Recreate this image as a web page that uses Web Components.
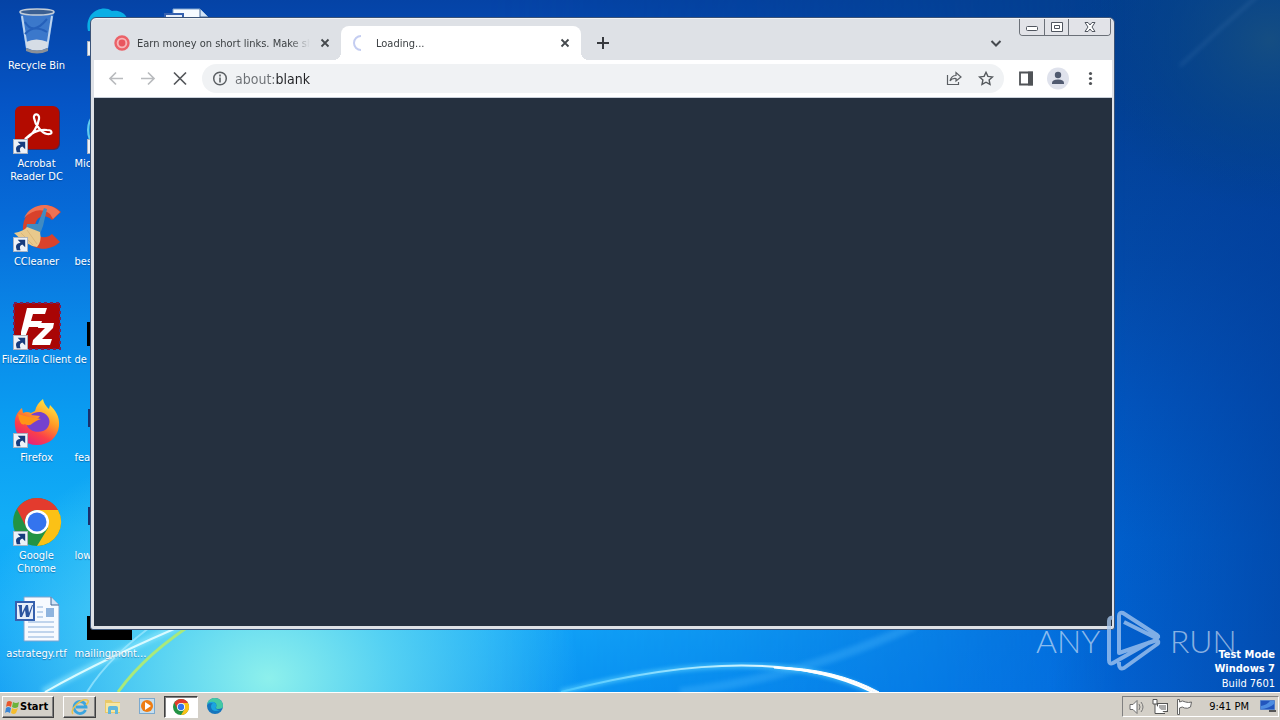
<!DOCTYPE html>
<html lang="en">
<head>
<meta charset="utf-8">
<title>Desktop</title>
<style>
  html, body { height: 100%; margin: 0; }
  body { font: 11px/13px "DejaVu Sans Condensed", "Liberation Sans", sans-serif; overflow: hidden; }
</style>
</head>
<body>
<desk-top></desk-top>
<script>
const glyphs = {
  bin: `<svg viewBox="0 0 48 48"><path d="M7 4h34l-6 37q-11 6-22 0z" fill="#4d88d4" opacity=".75"/><path d="M9 8l5 32M39 8l-5 32" stroke="#bcd4f0" stroke-width="2"/><path d="M12 14q8 14 22-3M12 26q9-10 22-2" fill="none" stroke="#2560ba" stroke-width="2"/><path d="M13 34q10-5 22 0l-1 6q-10 5-20 0z" fill="#d6dde6"/><path d="M13 40q11 5 22 0v3q-11 5-22 0z" fill="#8b9097"/><ellipse cx="24" cy="4" rx="17" ry="3" fill="#3b5f91" stroke="#c5ced8" stroke-width="1.5"/></svg>`,
  acrobat: `<svg viewBox="0 0 48 48"><rect x="2" y="1" width="45" height="43" rx="6" fill="#720909" opacity=".6"/><rect x="2" y="0" width="44" height="43" rx="6" fill="#b30b00"/><path d="M12 33c8-4 13-13 14-20 1-6-6-6-5-1 1 7 8 15 13 16 6 1 6-4 0-4-8-1-16 3-22 9z" fill="none" stroke="#fff" stroke-width="2.2"/></svg>`,
  ccleaner: `<svg viewBox="0 0 48 48"><path d="M48 8C36-5 12 1 10 22s22 30 37 16l-8-8c-8 7-18 2-17-8s10-13 17-6z" fill="#d8422b"/><path d="M47 8C36-4 17 0 11 14q14-13 26-4l3 5z" fill="#ef7253"/><path d="M31 4l-6 16-11 0-1 5 14 5 3-8 4-17z" fill="#418bc1"/><path d="M1 29q10-2 13-6l13 5q2 10-3 15-10-1-23-14z" fill="#e9c98c"/><path d="M8 29l12 12M14 26l10 14" stroke="#dbb678"/></svg>`,
  filezilla: `<svg viewBox="0 0 48 48"><rect x="1" y="1" width="46" height="46" fill="#a90505"/><rect x="1" y="1" width="46" height="46" fill="none" stroke="#74205a" stroke-width="2" stroke-dasharray="3 3"/><path d="M14 6h20l-2 6H20l-2 7h11l-2 6H16l-5 13H8V30zM26 21h15l-1 5-11 11h10l-2 6H19l1-5 12-12h-7z" fill="#fff"/></svg>`,
  firefox: `<svg viewBox="0 0 48 48"><defs><linearGradient id="f" x1=".8" y1="0" x2=".25" y2="1"><stop stop-color="#fff14a"/><stop offset=".4" stop-color="#ff9b26"/><stop offset=".7" stop-color="#fb4049"/><stop offset="1" stop-color="#df1c83"/></linearGradient></defs><path d="M2 26c-1-8 2-14 7-18l1 5q4-2 8 0l4-2c1-5 4-9 8-12 1 5 3 7 6 10l1-4c5 5 10 11 9 21-1 11-10 19-22 19S3 37 2 26z" fill="url(#f)"/><path d="M18 15c10-8 23 2 17 12-5 8-21 6-22-5l7-2q5-1 7-4z" fill="#7541cf"/><path d="M5 14q9 3 18 4l5 1q-4 1-8 4-4 4-8 1Q7 27 5 14" fill="#ff9417"/></svg>`,
  chrome: `<svg viewBox="0 0 48 48"><circle cx="24" cy="24" r="24" fill="#229344"/><path d="M24 12h21a24 24 0 0 1-21 36l11-18z" fill="#fbc116"/><path d="M4 11a24 24 0 0 1 41 1H24a12 12 0 0 0-11 17z" fill="#e33b2e"/><circle cx="24" cy="24" r="12" fill="#fff"/><circle cx="24" cy="24" r="9.5" fill="#3474ee"/></svg>`,
  word: `<svg viewBox="0 0 48 48"><path d="M11 1h27l8 8v36H11z" fill="#f6faff" stroke="#7fa4cf"/><path d="M38 1v8h8" fill="#d1e3f6" stroke="#416796"/><path d="M24 11h6M24 16h6M24 21h6M15 26h26M15 31h26M15 36h26M15 41h26" stroke="#89aeda"/><rect x="33" y="12" width="8" height="9" fill="#8fb4de"/><rect x="3" y="6" width="18" height="18" fill="#e6eefa" stroke="#3560ae" stroke-width="2"/><path d="M5 9h4v8l4-8h2l1 8 3-8h1l-4 12h-3l-1-7-3 7H7L6 11z" fill="#2b549f"/></svg>`,
  skype: `<svg viewBox="0 0 48 48"><path d="M1 23C-3 4 16-4 25 3c12-2 19 8 17 21z" fill="#0aaee5"/></svg>`,
  edgebit: `<svg viewBox="0 0 48 48"><circle cx="24" cy="24" r="23" fill="#1789d8" stroke="#62ccee" stroke-width="2"/></svg>`,
  black: `<svg viewBox="0 0 48 48"><rect x="0" y="20" width="45" height="24" fill="#000"/></svg>`,
  sliver: `<svg viewBox="0 0 48 48"><path d="M2 9v18" stroke="#19306c" stroke-width="2"/></svg>`,
  none: `<svg viewBox="0 0 48 48"></svg>`,
  arrow: `<svg viewBox="0 0 16 16"><rect x=".5" y=".5" width="15" height="15" fill="#edf2f8" stroke="#aab2bf"/><path d="M4 14q-3-7 4-8L5 3h8v8l-3-3q-4 1-2 6z" fill="#173c7d"/></svg>`,
  favicon: `<svg viewBox="0 0 16 16"><circle cx="8" cy="8" r="6.5" fill="#f6b5b8" stroke="#eb6268" stroke-width="2.4"/><circle cx="8" cy="8" r="3.4" fill="#e9565e"/></svg>`,
  spinner: `<svg viewBox="0 0 16 16"><path d="M8 1a7 7 0 0 0 0 14" fill="none" stroke="#c4cdf1" stroke-width="2"/></svg>`,
  close: `<svg viewBox="0 0 16 16"><path d="M4.500 4.500l7 7m0-7l-7 7" stroke="#45494d" stroke-width="1.800"/></svg>`,
  plus: `<svg viewBox="0 0 16 16"><path d="M8 2v12M2 8h12" stroke="#37393e" stroke-width="2"/></svg>`,
  chevron: `<svg viewBox="0 0 16 16"><path d="M3.500 6L8 10.500 12.500 6" fill="none" stroke="#45494f" stroke-width="2"/></svg>`,
  back: `<svg viewBox="0 0 16 16"><path d="M15 7.500H2m6-6l-6 6 6 6" fill="none" stroke="#b9bbbe" stroke-width="1.700"/></svg>`,
  forward: `<svg viewBox="0 0 16 16"><path d="M1 7.500h13m-6-6l6 6-6 6" fill="none" stroke="#b9bbbe" stroke-width="1.700"/></svg>`,
  stop: `<svg viewBox="0 0 16 16"><path d="M2 1.500l12 12m0-12l-12 12" stroke="#54575b" stroke-width="1.700"/></svg>`,
  info: `<svg viewBox="0 0 16 16"><circle cx="8" cy="7.500" r="6.300" fill="none" stroke="#5b5f63" stroke-width="1.500"/><path d="M8 6.500v5m0-8v2" stroke="#5b5f63" stroke-width="1.600"/></svg>`,
  share: `<svg viewBox="0 0 16 16"><path d="M1.500 4v9.500h11V11M4 10c1-4 3-5.500 6-5.500V1.500l5 4.500-5 4V7.500Q6 7 4 10z" fill="none" stroke="#5b5f63" stroke-width="1.200"/></svg>`,
  star: `<svg viewBox="0 0 16 16"><path d="M8 1.300l1.900 4.100 4.500.5-3.300 3 .9 4.500L8 11.200l-4 2.200.9-4.500-3.300-3 4.500-.5z" fill="none" stroke="#54585c" stroke-width="1.400"/></svg>`,
  panel: `<svg viewBox="0 0 16 16"><path d="M2 1.500h12v12H2z" fill="#fff" stroke="#505357" stroke-width="1.800"/><path d="M10 .6h5v13.800h-5z" fill="#505357"/></svg>`,
  avatar: `<svg viewBox="0 0 22 22"><circle cx="11" cy="10.500" r="11" fill="#dfe2ec"/><circle cx="11" cy="7" r="3.200" fill="#505a70"/><path d="M5 16v-1q0-3.500 6-3.500t6 3.500v1z" fill="#505a70"/></svg>`,
  dots: `<svg viewBox="0 0 16 16"><circle cx="8.500" cy="2.500" r="1.600" fill="#505357"/><circle cx="8.500" cy="7.500" r="1.600" fill="#505357"/><circle cx="8.500" cy="12.500" r="1.600" fill="#505357"/></svg>`,
  min: `<svg viewBox="0 0 16 16"><rect x="2.500" y="7.500" width="11" height="4" rx="1" fill="#fff" stroke="#50555f"/></svg>`,
  max: `<svg viewBox="0 0 16 16"><path d="M2.500 3.500h11v9h-11zM5.500 6.500h5v3h-5z" fill="#fff" stroke="#50555f"/></svg>`,
  quit: `<svg viewBox="0 0 16 16"><path d="M3 3.500h3l2 2.500 2-2.500h3l-3 4.500 3 4.500h-3L8 10l-2 2.500H3L6 8z" fill="#fff" stroke="#50555f"/></svg>`,
  windows: `<svg viewBox="0 0 16 16"><path d="M3 3q2-2 5 0L7 8Q4 6 2 8z" fill="#e9572b"/><path d="M9 3q3 2 6 0l-1 5q-3 2-6 0z" fill="#6db33c"/><path d="M2 9q2-2 5 0l-1 5q-3-2-5 0z" fill="#3a86d5"/><path d="M8 9q3 2 6 0l-2 5q-2 2-5 0z" fill="#f5bd2d"/></svg>`,
  ie: `<svg viewBox="0 0 18 18"><path d="M14.500 12A6 6 0 1 1 15 9H5" fill="none" stroke="#3ca5df" stroke-width="2.800"/><path d="M2 16C-2 12 10 0 16 2q3 1-1 5" fill="none" stroke="#ecc34c" stroke-width="1.500"/></svg>`,
  folder: `<svg viewBox="0 0 18 18"><path d="M1 2h6l2 2h7v11H1z" fill="#e9c969"/><path d="M2 5h14v9H2z" fill="#f7e7a4"/><path d="M4 16v-6q0-2 2-2h6q2 0 2 2v6h-3v-4H7v4z" fill="#62b7dc"/></svg>`,
  media: `<svg viewBox="0 0 18 18"><rect x="1.500" y=".5" width="15" height="15" fill="#c6dff0" stroke="#7ba9ce"/><circle cx="9" cy="8" r="6" fill="#ee7d13"/><path d="M7 4l6 4-6 4z" fill="#fff"/></svg>`,
  edge: `<svg viewBox="0 0 18 18"><circle cx="9" cy="8" r="8" fill="#1675bd"/><path d="M1 7C2-3 17-2 17 8q0 3-5 3-2 0-2-1 2-6-4-6-4 0-5 3z" fill="#43c9a4"/><path d="M1 7c3-6 11-3 9 2-1 1 0 3 4 3-9 4-11-5-7-7Q2 5 1 7" fill="#1ba4df"/></svg>`,
  sound: `<svg viewBox="0 0 18 18"><path d="M2 6.500h3l4-4v13l-4-4H2z" fill="#fff" stroke="#6d6d6d"/><path d="M11 6q2 3 0 6M13 4q4 5 0 10" fill="none" stroke="#777"/></svg>`,
  network: `<svg viewBox="0 0 18 18"><rect x="5.500" y="5.500" width="10" height="8" fill="#aaa" stroke="#555"/><path d="M6.500 6.500h8v6h-8z" fill="none" stroke="#fff"/><path d="M1 1.500h4V6H1zM3 6v9.500h10" fill="#fff" stroke="#555"/></svg>`,
  flag: `<svg viewBox="0 0 18 18"><path d="M1.500 1.500v15h2V10q3-2 5 0 3 1 6-1l1-5q-3 1-6 0-3-2-6 0V1.500z" fill="#fff" stroke="#666"/></svg>`,
  monitor: `<svg viewBox="0 0 18 18"><path d="M1.500 2.500h14v9h-14z" fill="#2256bd" stroke="#5482cb"/><path d="M2 8q6-1 9-5h4v3q-6 5-13 5z" fill="#4d8de1"/><path d="M10 13h7" stroke="#555" stroke-width="2"/></svg>`
};

function define(name, render) {
  customElements.define(name, class extends HTMLElement {
    constructor() {
      super();
      this.attachShadow({ mode: "open" }).innerHTML = render(this);
    }
  });
}

define("ui-glyph", el => `
<style>:host{display:block;flex:none;width:16px;height:16px} svg{display:block;width:100%;height:100%;overflow:visible}</style>
${glyphs[el.getAttribute("name")]}`);

define("desk-icon", el => `
<style>
:host{display:flex;flex-direction:column;align-items:center;gap:3px;height:98px;box-sizing:border-box;color:#fff;text-align:center;text-shadow:0 1px 1px #0035707a}
.art{display:grid;width:48px;height:48px}
.art>*{grid-area:1/1}
.pic{width:48px;height:48px}
.link{align-self:end;width:15px;height:15px}
.label{width:72px;white-space:pre-line}
:host([cut]) .label{text-align:left}
</style>
<div class="art"><ui-glyph class="pic" name="${el.getAttribute("icon")}"></ui-glyph>${el.hasAttribute("shortcut") ? '<ui-glyph class="link" name="arrow"></ui-glyph>' : ""}</div>
<div class="label"><slot></slot></div>`);

define("wall-paper", () => `
<style>
:host{display:block;overflow:hidden;background:linear-gradient(#033f8e,#034196 15%,#034cab 38%,#0259c4 58%,#0066d6 78%,#0369dc)}
div{position:absolute;inset:0}
.left{background:linear-gradient(#0543a6,#0555c6 15%,#076bd8 31%,#0a88e8 47%,#0a9cf1 60%,#12aef7 76%,#14aafa 88%,#0a98f5);-webkit-mask:linear-gradient(90deg,#000 38%,#000b 56%,#0006 72%,#0000 88%)}
.glow{background:radial-gradient(ellipse 310px 250px at 21% 98%,#8df0ec 0%,#65dcf2cc 40%,#32c4fa00 100%)}
.dark{background:linear-gradient(90deg,#0240a000 82%,#023c98a0)}
svg{position:absolute;inset:0;width:100%;height:100%}
</style>
<div class="left"></div><div class="glow"></div><div class="dark"></div>
<svg viewBox="0 0 1280 692" preserveAspectRatio="none" fill="none">
<defs><filter id="b"><feGaussianBlur stdDeviation="2"/></filter><radialGradient id="d"><stop stop-color="#174f80" stop-opacity=".9"/><stop offset=".55" stop-color="#074584" stop-opacity=".5"/><stop offset="1" stop-color="#024184" stop-opacity="0"/></radialGradient><linearGradient id="arc"><stop stop-color="#45c5ff"/><stop offset=".5" stop-color="#b8edff"/><stop offset=".8" stop-color="#fff"/></linearGradient></defs>
<ellipse cx="1270" cy="40" rx="190" ry="170" fill="url(#d)"/>
<path d="M43 692Q100 660 215 610" stroke="#98ecff" stroke-width="7" opacity=".55" filter="url(#b)"/>
<path d="M45 692Q105 658 195 620" stroke="#d8faff" stroke-width="2"/>
<path d="M87 692Q110 655 160 620" stroke="#a2eaff" stroke-width="2" opacity=".7"/>
<path d="M118 692Q146 653 200 619" stroke="#a9e97b" stroke-width="3"/>
<path d="M680 692Q800 678 915 625" stroke="#53bdff" stroke-width="9" opacity=".3" filter="url(#b)"/>
<path d="M561 692Q770 638 876 694" stroke="#65d7ff" stroke-width="5" opacity=".6" filter="url(#b)"/>
<path d="M561 692Q770 638 876 694" stroke="url(#arc)" stroke-width="2"/>
<path d="M774 668Q832 671 875 692L879 692Q835 668 774 667z" fill="#fff" stroke="#fff"/>
<path d="M1180 66Q1220 28 1262 -8" stroke="#5a8dc4" stroke-width="2" opacity=".3" filter="url(#b)"/>
</svg>`);

define("browser-tab", el => `
<style>
:host{display:flex;align-items:center;gap:7px;box-sizing:border-box;height:34px;position:relative;padding:0 8px 0 20px;color:#3c4043;flex:0 1 240px;min-width:0}
:host([active]){background:#fff;border-radius:8px 8px 0 0;padding-left:12px}
:host([active])::before,:host([active])::after{content:"";position:absolute;bottom:0;width:8px;height:8px}
:host([active])::before{left:-8px;background:radial-gradient(circle at 0 0,#0000 8px,#fff 8px)}
:host([active])::after{right:-8px;background:radial-gradient(circle at 100% 0,#0000 8px,#fff 8px)}
.title{flex:1;overflow:hidden;white-space:nowrap;-webkit-mask:linear-gradient(90deg,#000 88%,#0000)}
button{border:0;background:none;padding:0}
</style>
<ui-glyph name="${el.getAttribute("icon")}"></ui-glyph><span class="title"><slot></slot></span>
<button aria-label="Close tab"><ui-glyph name="close"></ui-glyph></button>`);

define("window-buttons", () => `
<style>
:host{display:flex;border:1px solid #6b7078;border-top:0;border-radius:0 0 4px 4px;height:16px}
button{border:0;background:#e2e3e8;padding:0;width:24px;display:grid;place-items:center;border-radius:0 0 0 3px}
button+button{border-left:1px solid #6b7078;border-radius:0}
button:last-child{width:42px;border-radius:0 0 3px 0}
</style>
<button aria-label="Minimize"><ui-glyph name="min"></ui-glyph></button><button aria-label="Maximize"><ui-glyph name="max"></ui-glyph></button><button aria-label="Close"><ui-glyph name="quit"></ui-glyph></button>`);

define("browser-window", () => `
<style>
:host{display:flex;flex-direction:column;box-sizing:border-box;border:1px solid #3b5377;border-radius:6px 6px 3px 3px;background:#dee1e6;box-shadow:inset 0 1px #f1f3f6;padding:8px 2px 3px 3px}
.strip{display:flex;align-items:center;height:34px;padding-right:100px}
.strip .first{flex:0 1 247px}
button{border:0;background:none;padding:0;display:grid;place-items:center;width:32px;height:28px;flex:none}
.new{margin-left:6px}
.grow{flex:1}
.bar{display:flex;align-items:center;height:37px;background:#fff;border-bottom:1px solid #c9d0da;padding:0 6px}
.omni{flex:1;display:flex;align-items:center;height:29px;border-radius:15px;background:#f0f2f4;margin:0 6px;padding:0 2px 0 10px}
input{flex:1;min-width:0;border:0;outline:0;padding:0;margin-left:7px;font:14px/20px "DejaVu Sans Condensed","Liberation Sans",sans-serif;color:#202124;background:linear-gradient(90deg,#6c7074 41px,#202124 41px);-webkit-background-clip:text;background-clip:text;-webkit-text-fill-color:transparent}
.face{width:22px;height:22px}
.page{flex:1;background:#25303f}
window-buttons{position:absolute;top:1px;right:3px}
</style>
<div class="strip"><browser-tab class="first" icon="favicon">Earn money on short links. Make short</browser-tab><browser-tab active icon="spinner">Loading...</browser-tab>
<button class="new" aria-label="New tab"><ui-glyph name="plus"></ui-glyph></button><span class="grow"></span><button aria-label="Search tabs"><ui-glyph name="chevron"></ui-glyph></button></div>
<window-buttons></window-buttons>
<div class="bar"><button aria-label="Back"><ui-glyph name="back"></ui-glyph></button><button aria-label="Forward"><ui-glyph name="forward"></ui-glyph></button><button aria-label="Stop"><ui-glyph name="stop"></ui-glyph></button>
<div class="omni"><ui-glyph name="info"></ui-glyph><input aria-label="Address" value="about:blank"><button aria-label="Share"><ui-glyph name="share"></ui-glyph></button><button aria-label="Bookmark"><ui-glyph name="star"></ui-glyph></button></div>
<button aria-label="Side panel"><ui-glyph name="panel"></ui-glyph></button><button aria-label="Profile"><ui-glyph class="face" name="avatar"></ui-glyph></button><button aria-label="Menu"><ui-glyph name="dots"></ui-glyph></button></div>
<div class="page"></div>`);

define("brand-mark", () => `
<style>
:host{display:flex;align-items:center;gap:8px;color:#ffffff8c;font:300 32px/60px Lato,sans-serif;pointer-events:none}
svg{width:56px;height:62px;flex:none}
span{width:62px;text-align:center}
</style>
<span>ANY</span><svg viewBox="0 0 56 62" fill="none" stroke="#a9c9f0" stroke-opacity=".75" stroke-width="4" stroke-linejoin="round"><path d="M7 8q-4-1-4 3v39q0 5 4 3l37-21M13 6q0-4 4-3l34 22q3 2-1 3L18 12M13 6v37l38-13q3 3-1 5L18 58q-5 2-5-4v-2"/></svg><span>RUN</span>`);

define("task-button", el => `
<style>
:host{display:block}
button{display:flex;align-items:center;justify-content:center;box-sizing:border-box;width:34px;height:22px;padding:0;border:1px solid #0000;background:none}
:host([raised]) button{width:33px;border-color:#fff #404040 #404040 #fff;box-shadow:inset -1px -1px #808080}
:host([pressed]) button{background:#fff;border-color:#404040 #fff #fff #404040;box-shadow:inset 1px 1px #808080}
ui-glyph{width:18px;height:18px}
:host([pressed]) ui-glyph{width:16px;height:16px}
</style><button aria-label="${el.getAttribute("label")}"><ui-glyph name="${el.getAttribute("icon")}"></ui-glyph></button>`);

define("task-bar", () => `
<style>
:host{display:flex;align-items:center;box-sizing:border-box;height:28px;padding:0 1px 0 2px;background:#d4d0c8;border-top:1px solid #fff;box-shadow:0 -1px #d4d0c8}
.start{display:flex;align-items:center;width:52px;height:22px;box-sizing:border-box;padding:0 0 0 1px;border:1px solid;border-color:#fff #404040 #404040 #fff;box-shadow:inset -1px -1px #808080;background:none;font:bold 11px/13px "DejaVu Sans Condensed","Liberation Sans",sans-serif;margin-right:9px;color:#000}
.grow{flex:1}
.tray{display:flex;align-items:center;box-sizing:border-box;width:157px;height:21px;padding:0 1px 0 5px;border:1px solid;border-color:#808080 #fff #fff #808080;gap:6px}
.tray ui-glyph{width:18px;height:18px}
time{flex:1;text-align:right;white-space:nowrap;padding-right:4px}
</style>
<button class="start"><ui-glyph name="windows"></ui-glyph>Start</button>
<task-button raised icon="ie" label="Internet Explorer"></task-button><task-button icon="folder" label="Explorer"></task-button><task-button icon="media" label="Media Player"></task-button><task-button pressed icon="chrome" label="Chrome"></task-button><task-button icon="edge" label="Edge"></task-button>
<span class="grow"></span><div class="tray"><ui-glyph name="sound"></ui-glyph><ui-glyph name="network"></ui-glyph><ui-glyph name="flag"></ui-glyph><time>9:41 PM</time><ui-glyph name="monitor"></ui-glyph></div>`);

define("desk-top", () => `
<style>
:host{display:flex;flex-direction:column;height:100vh}
main{flex:1;min-height:0;position:relative;overflow:hidden}
wall-paper{position:absolute;inset:0}
.icons{position:relative;display:grid;grid:auto-flow 98px/73px 75px 75px;padding:8px 0 0}
browser-window{position:absolute;inset:17px 165px 62px 90px}
brand-mark{position:absolute;right:48px;bottom:20px}
.build{position:absolute;right:5px;bottom:0;color:#fff;text-align:right;line-height:14px}
.build p{margin:0}
.build p:last-child{line-height:16px}
</style>
<main><wall-paper></wall-paper>
<div class="icons">
<desk-icon icon="bin">Recycle Bin</desk-icon><desk-icon icon="skype" shortcut></desk-icon><desk-icon icon="word"></desk-icon>
<desk-icon icon="acrobat" shortcut>Acrobat
Reader DC</desk-icon><desk-icon cut icon="edgebit" shortcut>Mic</desk-icon><span></span>
<desk-icon icon="ccleaner" shortcut>CCleaner</desk-icon><desk-icon cut icon="none">bes</desk-icon><span></span>
<desk-icon icon="filezilla" shortcut>FileZilla Client</desk-icon><desk-icon cut icon="black">de</desk-icon><span></span>
<desk-icon icon="firefox" shortcut>Firefox</desk-icon><desk-icon cut icon="sliver">fea</desk-icon><span></span>
<desk-icon icon="chrome" shortcut>Google
Chrome</desk-icon><desk-icon cut icon="sliver">low</desk-icon><span></span>
<desk-icon icon="word">astrategy.rtf</desk-icon><desk-icon cut icon="black">mailingmont...</desk-icon><span></span>
</div>
<browser-window></browser-window>
<brand-mark></brand-mark>
<div class="build"><p><b>Test Mode</b></p><p><b>Windows 7</b></p><p>Build 7601</p></div>
</main>
<task-bar></task-bar>`);
</script>
</body>
</html>
